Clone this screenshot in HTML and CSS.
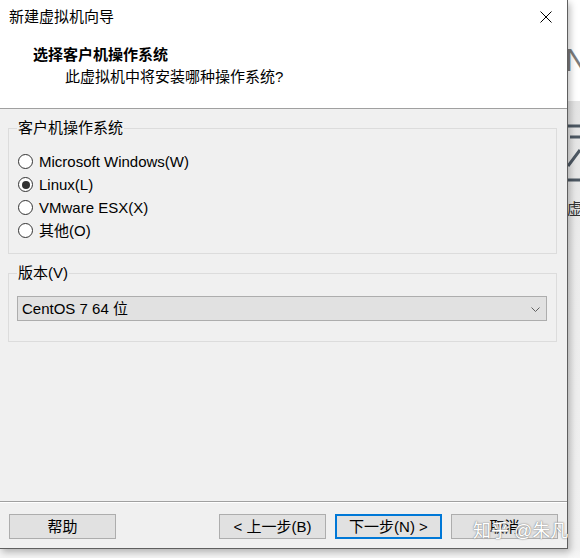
FILE: index.html
```html
<!DOCTYPE html>
<html lang="zh-CN">
<head>
<meta charset="utf-8">
<title>新建虚拟机向导</title>
<link rel="stylesheet" href="styles.css">
</head>
<body>
<div class="desk">
  <div class="dialog">
    <div class="header">
      <div class="titlebar">
        <span class="title">新建虚拟机向导</span>
        <svg class="close" width="12" height="12" viewBox="0 0 12 12"><path d="M0.5 0.5 L11.5 11.5 M11.5 0.5 L0.5 11.5" stroke="#000" stroke-width="1" fill="none"/></svg>
      </div>
      <div class="heading">选择客户机操作系统</div>
      <div class="sub">此虚拟机中将安装哪种操作系统?</div>
    </div>
    <div class="body">
      <div class="group os">
        <div class="legend">客户机操作系统</div>
        <div class="radios">
          <div class="radio"><span class="circle"></span><span>Microsoft Windows(W)</span></div>
          <div class="radio"><span class="circle checked"></span><span>Linux(L)</span></div>
          <div class="radio"><span class="circle"></span><span>VMware ESX(X)</span></div>
          <div class="radio"><span class="circle"></span><span>其他(O)</span></div>
        </div>
      </div>
      <div class="group ver">
        <div class="legend">版本(V)</div>
        <div class="select">
          <span>CentOS 7 64 位</span>
          <svg class="chev" width="9" height="5" viewBox="0 0 9 5"><path d="M0.5 0.5 L4.5 4.5 L8.5 0.5" stroke="#606060" stroke-width="1" fill="none"/></svg>
        </div>
      </div>
    </div>
    <div class="footer">
      <div class="btn">帮助</div>
      <div class="spacer"></div>
      <div class="btn">&lt; 上一步(B)</div>
      <div class="btn primary">下一步(N) &gt;</div>
      <div class="btn">取消</div>
    </div>
  </div>
  <div class="behind">
    <span class="bg-n">N</span>
    <svg class="bg-icon" width="12" height="60" viewBox="0 0 12 60"><path d="M0 2 H12 M2 13 H12 M0 42 L12 26 M0 56 H12" stroke="#4d5863" stroke-width="3" fill="none"/></svg>
    <span class="bg-xu">虚</span>
  </div>
  <div class="watermark">知乎 @朱凡</div>
</div>
</body>
</html>
```

FILE: styles.css
```css
html, body {
  margin: 0;
  padding: 0;
}
body {
  width: 580px;
  height: 558px;
  overflow: hidden;
  background: #f4f4f4;
  font-family: "Liberation Sans", "Noto Sans CJK SC", sans-serif;
  font-size: 15px;
  line-height: 20px;
  color: #000;
}
.desk {
  position: relative;
  width: 580px;
  height: 558px;
  display: flex;
  align-items: flex-start;
}
.dialog {
  width: 567px;
  height: 548px;
  flex: none;
  display: flex;
  flex-direction: column;
  background: #f0f0f0;
  border-right: 1px solid #5f5f5f;
  border-bottom: 1px solid #5f5f5f;
  box-shadow: 2px 3px 7px rgba(0, 0, 0, 0.28);
  position: relative;
  z-index: 1;
}
.header {
  height: 108px;
  background: #fff;
  border-bottom: 1px solid #a0a0a0;
  flex: none;
}
.titlebar {
  height: 34px;
  display: flex;
  align-items: center;
  justify-content: space-between;
  padding: 0 15px 0 9px;
}
.close {
  display: block;
}
.heading {
  margin-top: 11px;
  padding-left: 33px;
  font-weight: bold;
}
.sub {
  margin-top: 2px;
  padding-left: 65px;
}
.body {
  flex: 1;
  padding: 19px 10px 0 8px;
}
.group {
  border: 1px solid #dcdcdc;
  padding: 0 9px 0 8px;
}
.legend {
  display: block;
  width: fit-content;
  margin-top: -11px;
  padding: 0 1px;
  background: #f0f0f0;
}
.os .radios {
  margin-top: 12px;
  padding-bottom: 11px;
}
.radio {
  height: 23px;
  display: flex;
  align-items: center;
  gap: 6px;
  padding-left: 1px;
}
.circle {
  width: 13px;
  height: 13px;
  border: 1px solid #333;
  border-radius: 50%;
  background: #fff;
  display: flex;
  align-items: center;
  justify-content: center;
  flex: none;
}
.circle.checked::after {
  content: "";
  width: 8px;
  height: 8px;
  border-radius: 50%;
  background: #333;
}
.ver {
  margin-top: 19px;
  padding-bottom: 20px;
}
.select {
  margin-top: 13px;
  height: 23px;
  border: 1px solid #adadad;
  background: #e1e1e1;
  display: flex;
  align-items: center;
  justify-content: space-between;
  padding: 0 6px 0 4px;
}
.chev {
  display: block;
  margin-top: 1px;
}
.footer {
  flex: none;
  height: 47px;
  border-top: 1px solid #a0a0a0;
  box-shadow: inset 0 1px 0 #fff;
  display: flex;
  align-items: flex-start;
  gap: 9px;
  padding: 12px 9px 0 9px;
  box-sizing: border-box;
}
.spacer {
  flex: 1;
}
.btn {
  width: 107px;
  height: 25px;
  box-sizing: border-box;
  border: 1px solid #adadad;
  background: #e1e1e1;
  display: flex;
  align-items: center;
  justify-content: center;
}
.btn.primary {
  border: 2px solid #0078d7;
}
.behind {
  flex: 1;
  height: 558px;
  position: relative;
  overflow: hidden;
  background: linear-gradient(#ffffff 0, #ffffff 101px, #e4e4e4 101px, #ececec 250px, #f0f0f0 548px, #f7f7f7 100%);
}
.bg-n {
  position: absolute;
  left: -3px;
  top: 40px;
  font-size: 32px;
  line-height: 40px;
  color: #7c7c7c;
}
.bg-icon {
  position: absolute;
  left: 0;
  top: 124px;
}
.bg-xu {
  position: absolute;
  left: -1px;
  top: 199px;
  color: #333;
}
.watermark {
  position: absolute;
  left: 473px;
  top: 520px;
  z-index: 2;
  font-size: 18px;
  line-height: 22px;
  color: #fff;
  text-shadow: 0 0 1px #777, 0 0 2px #999;
  white-space: nowrap;
}
```
